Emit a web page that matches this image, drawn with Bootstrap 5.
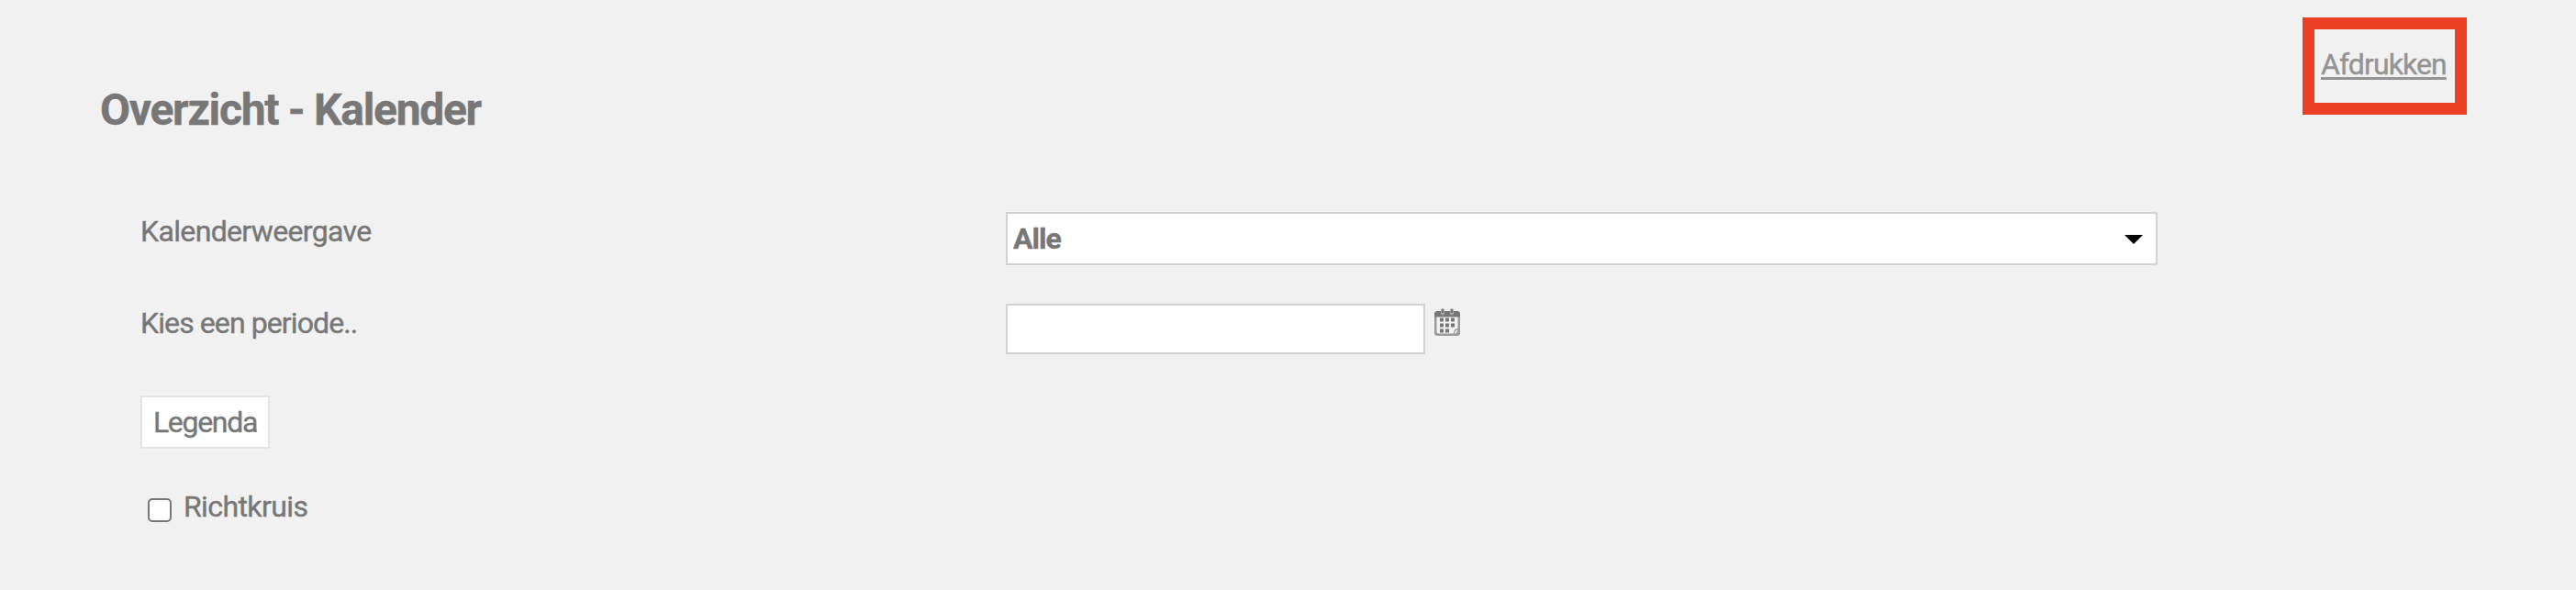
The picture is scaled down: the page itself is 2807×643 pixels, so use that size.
<!DOCTYPE html>
<html lang="nl">
<head>
<meta charset="utf-8">
<title>Overzicht - Kalender</title>
<link href="https://cdn.jsdelivr.net/npm/bootstrap@5.3.0/dist/css/bootstrap.min.css" rel="stylesheet">
<style>
html,body{height:100%;overflow:hidden}
body{background:#f1f1f1;color:#777;font-family:Roboto,"Liberation Sans",sans-serif;font-size:32px;line-height:40px;-webkit-text-stroke:.4px currentColor}
.page-head{padding:19px 119px 0 109px}
.page-title{margin:73px 0 0;font-size:48px;line-height:56px;font-weight:700;letter-spacing:-1.3px}
.print-box{width:179px;height:106px;border:13px solid #eb4025;padding:18px 0 0 7px}
.print-link{color:#949494;letter-spacing:-.9px;text-decoration-thickness:3px;text-underline-offset:3px}
.print-link:hover{color:#777}
.filters{margin:83px 0 0 153px}
.filter-line{height:100px}
.filter-label{width:943px;padding-top:1px;letter-spacing:-.65px}
.period-label{letter-spacing:-.9px}
.form-select.view-select{width:1255px;height:58px;border:2px solid #d2d2d2;border-radius:0;padding:0 60px 0 6px;font-size:32px;font-weight:700;line-height:54px;color:#777;letter-spacing:-1px;background-color:#fff;background-image:url("data:image/svg+xml,%3Csvg xmlns='http://www.w3.org/2000/svg' viewBox='0 0 20 10'%3E%3Cpath d='M0 0h20L10 10z'/%3E%3C/svg%3E");background-size:20px 10px;background-position:right 14px top 23px}
.form-control.date-input{width:457px;height:55px;border:2px solid #d2d2d2;border-radius:0}
.cal-icon{width:30px;height:32px;margin:5px 0 0 9px}
.btn.legend-btn{width:141px;height:58px;border:2px solid #e4e4e4;border-radius:0;background:#fff;color:#777;font-size:32px;line-height:40px;padding:7px 0 0;letter-spacing:-1.3px}
.form-check-input.cross-check{width:26px;height:26px;margin:12px 0 0 8px;border:2px solid #777;border-radius:5px;background-color:#fff}
.cross-label{margin:1px 0 0 13px;letter-spacing:-.6px}
</style>
</head>
<body>
<header class="page-head d-flex justify-content-between align-items-start">
  <h1 class="page-title">Overzicht - Kalender</h1>
  <div class="print-box"><a class="print-link d-block text-nowrap" href="#">Afdrukken</a></div>
</header>
<form class="filters">
  <div class="filter-line d-flex align-items-start">
    <label class="filter-label" for="view">Kalenderweergave</label>
    <select class="form-select view-select" id="view"><option>Alle</option></select>
  </div>
  <div class="filter-line d-flex align-items-start">
    <label class="filter-label period-label" for="period">Kies een periode..</label>
    <input class="form-control date-input" id="period" type="text">
    <svg class="cal-icon" viewBox="0 0 30 32" aria-hidden="true">
      <path d="M4.500 3h21q3.500 0 3.500 3.500v20q0 3.500-3.500 3.500h-21Q1 30 1 26.500v-20Q1 3 4.500 3z" fill="#999"/>
      <path d="M1 9.500v-3Q1 3 4.500 3h21Q29 3 29 6.500v3z" fill="#777"/>
      <path d="M3.500 9.500h23V22q-4.500 0-4.500 5.500H6q-2.500 0-2.500-2.500z" fill="#f1f1f1"/>
      <path d="M23 27.500q0-4 3.500-4 0 4-3.500 4z" fill="#e4e4e4"/>
      <path d="M8 1h4v4.500a2 2 0 0 1-4 0zM18 1h4v4.500a2 2 0 0 1-4 0z" fill="#aaa"/>
      <path d="M9 .5h2V5H9zM19 .5h2V5h-2z" fill="#777"/>
      <path d="M7 10.500h4v4H7zM13 10.500h4v4h-4zM19 10.500h4v4h-4zM7 16.500h4v4H7zM13 16.500h4v4h-4zM19 16.500h4v4h-4zM7 22.500h4v4H7zM13 22.500h4v4h-4z" fill="#777"/>
    </svg>
  </div>
  <div class="filter-line"><button class="btn legend-btn d-flex justify-content-center" type="button">Legenda</button></div>
  <div class="d-flex align-items-start">
    <input class="form-check-input cross-check" type="checkbox" id="cross">
    <label class="cross-label" for="cross">Richtkruis</label>
  </div>
</form>
<script src="https://cdn.jsdelivr.net/npm/bootstrap@5.3.0/dist/js/bootstrap.bundle.min.js"></script>
</body>
</html>
